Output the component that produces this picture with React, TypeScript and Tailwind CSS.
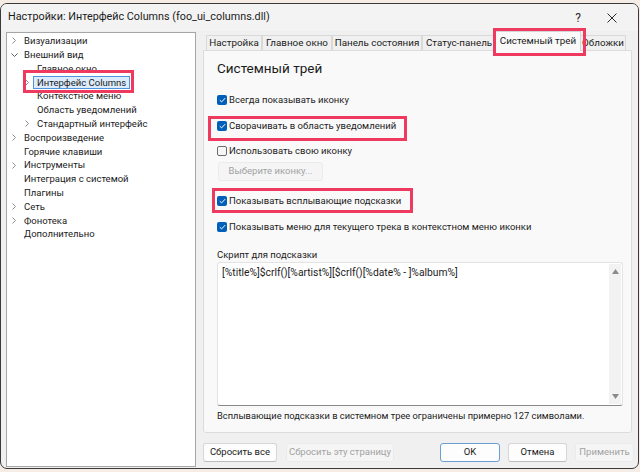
import React from 'react';

type TreeItem = {
  label: string;
  level: number;
  chevron?: 'right' | 'down';
  selected?: boolean;
};

const tree: TreeItem[] = [
  { label: 'Визуализации', level: 0, chevron: 'right' },
  { label: 'Внешний вид', level: 0, chevron: 'down' },
  { label: 'Главное окно', level: 1 },
  { label: 'Интерфейс Columns', level: 1, chevron: 'right', selected: true },
  { label: 'Контекстное меню', level: 1 },
  { label: 'Область уведомлений', level: 1 },
  { label: 'Стандартный интерфейс', level: 1, chevron: 'right' },
  { label: 'Воспроизведение', level: 0, chevron: 'right' },
  { label: 'Горячие клавиши', level: 0 },
  { label: 'Инструменты', level: 0, chevron: 'right' },
  { label: 'Интеграция с системой', level: 0 },
  { label: 'Плагины', level: 0 },
  { label: 'Сеть', level: 0, chevron: 'right' },
  { label: 'Фонотека', level: 0, chevron: 'right' },
  { label: 'Дополнительно', level: 0 },
];

const tabs = [
  { label: 'Настройка', w: 'w-[56px]' },
  { label: 'Главное окно', w: 'w-[70px]' },
  { label: 'Панель состояния', w: 'w-[90px]' },
  { label: 'Статус-панель', w: 'w-[74px]' },
  { label: 'Системный трей', w: 'w-[86px]', active: true },
  { label: 'Обложки', w: 'w-[46px]' },
];

const Chevron = ({ dir }: { dir?: 'right' | 'down' }) => (
  <span className="w-[8px] h-full flex items-center justify-center shrink-0">
    {dir === 'right' && (
      <svg width="4" height="7" viewBox="0 0 4 7">
        <path d="M0.5 0.5 L3.5 3.5 L0.5 6.5" fill="none" stroke="#8c8c8c" strokeWidth="1" />
      </svg>
    )}
    {dir === 'down' && (
      <svg width="7" height="4" viewBox="0 0 7 4">
        <path d="M0.5 0.5 L3.5 3.5 L6.5 0.5" fill="none" stroke="#5c5c5c" strokeWidth="1" />
      </svg>
    )}
  </span>
);

const Checkbox = ({ checked, label }: { checked: boolean; label: string }) => (
  <div className="h-[16px] flex items-center">
    {checked ? (
      <span className="w-[10px] h-[10px] rounded-[2px] bg-[#005fb8] flex items-center justify-center">
        <svg width="7" height="6" viewBox="0 0 7 6">
          <path d="M0.8 3.2 L2.6 4.9 L6.2 1.1" fill="none" stroke="#ffffff" strokeWidth="1" />
        </svg>
      </span>
    ) : (
      <span className="w-[10px] h-[10px] rounded-[2px] border border-[#6b6b6b] bg-[#f6f6f6]" />
    )}
    <span className="ml-[2px] text-[9.5px] text-[#1b1b1b] whitespace-nowrap">{label}</span>
  </div>
);

const Button = ({
  label,
  w,
  disabled,
  primary,
}: {
  label: string;
  w: string;
  disabled?: boolean;
  primary?: boolean;
}) => (
  <div
    className={`${w} h-[19px] rounded-[3px] flex items-center justify-center text-[9.5px] whitespace-nowrap border ${
      disabled
        ? 'bg-[#f5f5f5] border-[#ebebeb] text-[#a2a2a2]'
        : primary
          ? 'bg-[#fdfdfd] border-[#6a9fd6] text-[#1b1b1b]'
          : 'bg-[#fdfdfd] border-[#d6d6d6] border-b-[#bcbcbc] text-[#1b1b1b]'
    }`}
  >
    {label}
  </div>
);

export default function App() {
  return (
    <div className="relative w-[640px] h-[472px] bg-[#f4ece5] pt-[3px] overflow-hidden font-['Roboto',sans-serif]">
      <div className="w-[639px] h-[466px] rounded-[7px] border border-[#3a3a3a] bg-[#f0f0f0] flex flex-col overflow-hidden">
        {/* title bar */}
        <div className="h-[27px] flex items-center shrink-0 bg-[#f3f3f3]">
          <span className="ml-[7px] text-[10.8px] text-[#1b1b1b]">
            Настройки: Интерфейс Columns (foo_ui_columns.dll)
          </span>
          <span className="ml-auto w-[34px] text-center text-[12px] text-[#2b2b2b]">?</span>
          <span className="w-[34px] mr-[9px] flex items-center justify-center">
            <svg width="10" height="10" viewBox="0 0 10 10">
              <path d="M0.5 0.5 L9.5 9.5 M9.5 0.5 L0.5 9.5" stroke="#2b2b2b" strokeWidth="1" />
            </svg>
          </span>
        </div>

        <div className="flex-1 flex pl-[5px]">
          {/* preferences tree */}
          <div className="mt-[1px] w-[190px] h-[435px] bg-white border border-[#a6a6a6] pt-[1px]">
            {tree.map((item) => (
              <div
                key={item.label}
                className={`h-[13.8px] flex items-center pl-[3px] ${item.level === 1 ? 'ml-[13px]' : ''}`}
              >
                <Chevron dir={item.chevron} />
                <span
                  className={`ml-[2px] h-[13px] px-[3px] flex items-center text-[9.5px] leading-none text-[#1b1b1b] border whitespace-nowrap ${
                    item.selected ? 'bg-[#dcecfc] border-[#4d94dc]' : 'border-transparent'
                  }`}
                >
                  {item.label}
                </span>
              </div>
            ))}
          </div>

          {/* page */}
          <div className="ml-[7px] w-[429px] flex flex-col">
            <div className="h-[20px] flex items-end pl-[3px]">
              {tabs.map((t) =>
                t.active ? (
                  <div
                    key={t.label}
                    className={`${t.w} h-[20px] -mx-[1px] relative z-10 bg-[#f9f9f9] border border-b-0 border-[#d5d5d5] flex items-center justify-center text-[9.8px] text-[#1b1b1b] whitespace-nowrap`}
                  >
                    {t.label}
                  </div>
                ) : (
                  <div
                    key={t.label}
                    className={`${t.w} h-[16px] bg-[#f0f0f0] border border-b-0 border-[#d9d9d9] flex items-center justify-center text-[9.8px] text-[#1b1b1b] whitespace-nowrap`}
                  >
                    {t.label}
                  </div>
                ),
              )}
            </div>

            <div className="h-[383px] -mt-[1px] bg-[#f9f9f9] border border-[#dcdcdc] rounded-b-[3px] pl-[13px] pr-[8px] flex flex-col">
              <div className="mt-[7px] h-[20px] flex items-center text-[13.5px] text-[#1b1b1b]">Системный трей</div>
              <div className="mt-[14px]">
                <Checkbox checked label="Всегда показывать иконку" />
              </div>
              <div className="mt-[10px]">
                <Checkbox checked label="Сворачивать в область уведомлений" />
              </div>
              <div className="mt-[9px]">
                <Checkbox checked={false} label="Использовать свою иконку" />
              </div>
              <div className="mt-[3px] ml-[1px]">
                <Button label="Выберите иконку..." w="w-[105px]" disabled />
              </div>
              <div className="mt-[12px]">
                <Checkbox checked label="Показывать всплывающие подсказки" />
              </div>
              <div className="mt-[10px]">
                <Checkbox checked label="Показывать меню для текущего трека в контекстном меню иконки" />
              </div>
              <div className="mt-[13px] h-[14px] flex items-center text-[9.5px] text-[#1b1b1b]">Скрипт для подсказки</div>
              <div className="h-[144px] w-[406px] bg-white border border-[#e3e3e3] border-b-[#8a8a8a] rounded-[3px] flex">
                <div className="flex-1 pl-[4px] pt-[2px] text-[10.3px] text-[#1b1b1b]">
                  [%title%]$crlf()[%artist%][$crlf()[%date% - ]%album%]
                </div>
                <div className="w-[12px] my-[1px] mr-[1px] bg-[#f2f2f2] flex flex-col items-center justify-between py-[5px]">
                  <svg width="7" height="5" viewBox="0 0 7 5">
                    <path d="M0 5 L3.5 0 L7 5 Z" fill="#8a8a8a" />
                  </svg>
                  <svg width="7" height="5" viewBox="0 0 7 5">
                    <path d="M0 0 L3.5 5 L7 0 Z" fill="#8a8a8a" />
                  </svg>
                </div>
              </div>
              <div className="mt-[3px] h-[14px] flex items-center text-[9.3px] text-[#1b1b1b] whitespace-nowrap">
                Всплывающие подсказки в системном трее ограничены примерно 127 символами.
              </div>
            </div>

            <div className="mt-[10px] flex items-center">
              <Button label="Сбросить все" w="w-[74px]" />
              <div className="ml-[9px]">
                <Button label="Сбросить эту страницу" w="w-[108px]" disabled />
              </div>
              <div className="ml-auto flex gap-[8px] mr-[-2px]">
                <Button label="OK" w="w-[60px]" primary />
                <Button label="Отмена" w="w-[59px]" />
                <Button label="Применить" w="w-[59px]" disabled />
              </div>
            </div>
          </div>
        </div>
      </div>

      {/* highlight frames */}
      <div className="absolute left-[23px] top-[70px] w-[111px] h-[23px] border-[3px] border-[#ee3a5f]" />
      <div className="absolute left-[493px] top-[28px] w-[93px] h-[28px] border-[3px] border-[#ee3a5f] z-20" />
      <div className="absolute left-[208px] top-[116px] w-[199px] h-[25px] border-[3px] border-[#ee3a5f]" />
      <div className="absolute left-[212px] top-[188px] w-[201px] h-[25px] border-[3px] border-[#ee3a5f]" />
    </div>
  );
}
